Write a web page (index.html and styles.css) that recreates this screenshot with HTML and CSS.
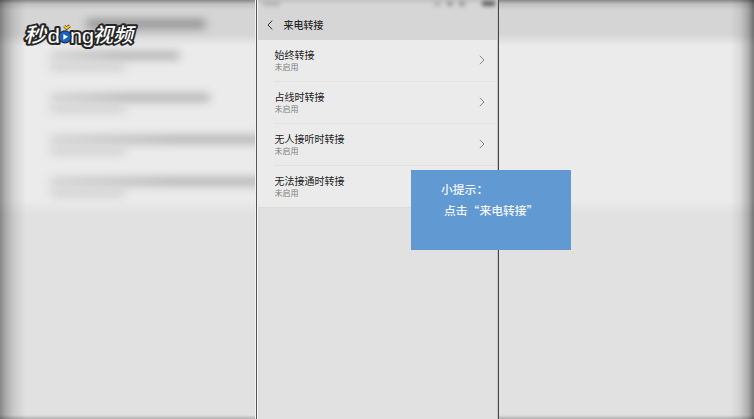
FILE: index.html
```html
<!DOCTYPE html>
<html lang="zh-CN">
  <head>
    <meta charset="UTF-8" />
    <meta name="viewport" content="width=device-width, initial-scale=1.0" />
    <title>来电转接</title>
    <link rel="stylesheet" href="styles.css">
  </head>
  <body>
    <div class="stage">
      <div class="backdrop">
        <div class="back-header"><span class="smear smear-header"></span></div>
        <div class="back-list">
          <div class="back-row">
            <span class="smear smear-short"></span>
            <span class="smear smear-sub"></span>
          </div>
          <div class="back-row">
            <span class="smear smear-medium"></span>
            <span class="smear smear-sub"></span>
          </div>
          <div class="back-row">
            <span class="smear smear-long"></span>
            <span class="smear smear-sub"></span>
          </div>
          <div class="back-row">
            <span class="smear smear-long"></span>
            <span class="smear smear-sub"></span>
          </div>
        </div>
      </div>
      <div class="vignette"></div>

      <div class="phone">
        <div class="status">
          <span class="blob clock"></span>
          <span class="blob signal"></span>
          <span class="blob wifi"></span>
          <span class="blob wifi"></span>
          <span class="blob battery"></span>
        </div>
        <div class="header">
          <svg class="back" viewBox="0 0 6 10"><path d="M5.2 .6 L1 5 L5.2 9.4" /></svg>
          <h1>来电转接</h1>
        </div>
        <ul class="list">
          <li class="item">
            <div class="label"><p class="name">始终转接</p><p class="state">未启用</p></div>
            <svg class="arrow" viewBox="0 0 6 10"><path d="M.8 .8 L5 5 L.8 9.2" /></svg>
          </li>
          <li class="item">
            <div class="label"><p class="name">占线时转接</p><p class="state">未启用</p></div>
            <svg class="arrow" viewBox="0 0 6 10"><path d="M.8 .8 L5 5 L.8 9.2" /></svg>
          </li>
          <li class="item">
            <div class="label"><p class="name">无人接听时转接</p><p class="state">未启用</p></div>
            <svg class="arrow" viewBox="0 0 6 10"><path d="M.8 .8 L5 5 L.8 9.2" /></svg>
          </li>
          <li class="item">
            <div class="label"><p class="name">无法接通时转接</p><p class="state">未启用</p></div>
            <svg class="arrow" viewBox="0 0 6 10"><path d="M.8 .8 L5 5 L.8 9.2" /></svg>
          </li>
        </ul>
      </div>

      <div class="tip">
        <p>小提示：</p>
        <p class="tip-text">点击“来电转接”</p>
      </div>

      <svg class="logo" width="126" height="36" viewBox="0 0 126 36">
        <g class="logo-text">
          <text class="cjk" transform="translate(5 23) skewX(-14)" textLength="22" lengthAdjust="spacingAndGlyphs">秒</text>
          <text class="latin" x="28.5" y="23.5" textLength="12.5" lengthAdjust="spacingAndGlyphs">d</text>
          <text class="latin" x="51" y="23.5" textLength="24" lengthAdjust="spacingAndGlyphs">ng</text>
          <text class="cjk" transform="translate(74 23) skewX(-14)" textLength="40" lengthAdjust="spacingAndGlyphs">视频</text>
        </g>
        <circle cx="46" cy="17.8" r="6.6" fill="#262626" />
        <circle cx="46" cy="17.8" r="5.6" fill="#1762c6" />
        <path d="M44.4 14.9 L49 17.8 L44.4 20.7 Z" fill="#fff" />
        <path d="M45.4 7 L47.6 9.2 L50.8 6.8" class="sprout-edge" />
        <path d="M45.4 7 L47.6 9.2 L50.8 6.8" class="sprout" />
      </svg>
    </div>
  </body>
</html>
```

FILE: styles.css
```css
* {
  box-sizing: border-box;
}
html,
body {
  margin: 0;
  padding: 0;
}
body {
  font-family: "Noto Sans CJK SC", sans-serif;
}
p,
h1,
ul {
  margin: 0;
  padding: 0;
}
.stage {
  position: relative;
  display: flex;
  justify-content: center;
  width: 754px;
  height: 419px;
  overflow: hidden;
  background: #e1e1e1;
}

/* blurred copy of the screen behind the phone */
.backdrop {
  position: absolute;
  inset: 0;
  background: linear-gradient(#d5d5d5 34px, #ebebeb 46px, #ebebeb 200px, #e1e1e1 214px);
}
.back-header {
  height: 40px;
  padding: 20px 0 0 86px;
}
.back-row {
  height: 42px;
  padding: 12px 0 0 50px;
}
.smear {
  display: block;
  height: 7px;
  border-radius: 4px;
  background: linear-gradient(to right, #ccc, #a8a8a8 50%, #a8a8a8);
  filter: blur(5px);
}
.smear-header {
  width: 120px;
  height: 8px;
  background: #868686;
}
.smear-short {
  width: 130px;
}
.smear-medium {
  width: 160px;
}
.smear-long {
  width: 250px;
}
.smear-sub {
  width: 76px;
  height: 6px;
  margin-top: 5px;
  background: #cacaca;
}
.vignette {
  position: absolute;
  inset: 0;
  background:
    linear-gradient(to right, rgba(0, 0, 0, .4), rgba(0, 0, 0, .24) 6px, rgba(0, 0, 0, .1) 14px, transparent 26px),
    linear-gradient(to left, rgba(0, 0, 0, .48), rgba(0, 0, 0, .24) 6px, rgba(0, 0, 0, .07) 14px, transparent 24px),
    linear-gradient(rgba(0, 0, 0, .36), rgba(0, 0, 0, .1) 4px, transparent 10px),
    linear-gradient(to top, rgba(0, 0, 0, .22), transparent 4px);
}

.phone {
  position: relative;
  width: 243px;
  height: 419px;
  border-left: 1px solid #555;
  border-right: 1px solid #444;
  box-shadow: -1px 0 #f2f2f2, inset 1px 0 #f2f2f2, inset -1px 0 #c8c8c8;
  background: #e1e1e1;
}
.status {
  display: flex;
  height: 10px;
  margin: 0 1px;
  padding: 1px 2px 0 5px;
  background: linear-gradient(#c4c4c4, #d6d6d6 5px);
}
.blob {
  width: 6px;
  height: 5px;
  margin-right: 6px;
  background: #999;
  filter: blur(2px);
}
.clock {
  width: 17px;
  margin-right: auto;
  background: #b3b3b3;
}
.signal {
  width: 7px;
  background: #b3b3b3;
}
.battery {
  width: 13px;
  margin: 0 0 0 11px;
  background: #5c5c5c;
}
.header {
  display: flex;
  align-items: center;
  height: 30px;
  margin: 0 1px;
  padding: 0 0 1px 9px;
  background: #d6d6d6;
}
.back {
  width: 6px;
  height: 10px;
  margin-right: 11px;
}
.back path,
.arrow path {
  fill: none;
  stroke: #333;
  stroke-width: 1;
}
.header h1 {
  font-size: 10px;
  line-height: 14px;
  font-weight: 500;
  color: #2a2a2a;
}
.list {
  list-style: none;
  margin: 0 1px;
  padding-left: 16px;
  background: #ebebeb;
  border-bottom: 1px solid #dcdcdc;
}
.item {
  display: flex;
  justify-content: space-between;
  height: 42px;
  padding: 8px 12px 0 1px;
  border-bottom: 1px solid #e2e2e2;
}
.item:last-child {
  height: 41px;
  border-bottom: 0;
}
.name {
  font-size: 10px;
  line-height: 14px;
  color: #222;
}
.state {
  font-size: 8px;
  line-height: 10px;
  color: #808080;
}
.arrow {
  width: 6px;
  height: 10px;
  margin-top: 7px;
}
.arrow path {
  stroke: #888;
}

.tip {
  position: absolute;
  left: 411px;
  top: 170px;
  width: 160px;
  height: 80px;
  padding: 8px 0 0 30px;
  background: #6199d2;
  color: #f2f6fb;
  font-size: 11.8px;
  line-height: 21px;
  font-weight: 500;
  white-space: nowrap;
}
.tip-text {
  padding-left: 3px;
}

.logo {
  position: absolute;
  left: 19px;
  top: 19px;
}
.logo-text {
  fill: #fff;
  stroke: #262626;
  stroke-width: 4px;
  stroke-linejoin: round;
  paint-order: stroke;
}
.cjk {
  font-family: "Noto Sans CJK SC", sans-serif;
  font-size: 20px;
  font-weight: 500;
}
.latin {
  font-family: "Liberation Sans", sans-serif;
  font-size: 21px;
}
.sprout,
.sprout-edge {
  fill: none;
  stroke: #f6d21c;
  stroke-width: 2;
}
.sprout-edge {
  stroke: #262626;
  stroke-width: 3;
}
```
